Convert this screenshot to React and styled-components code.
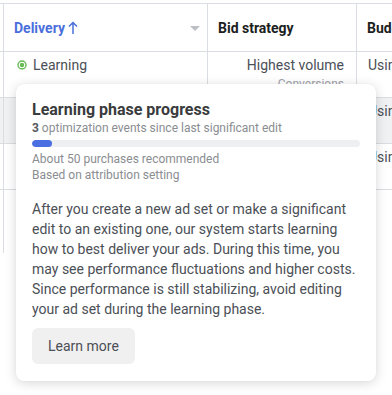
import React from "react";
import styled, { createGlobalStyle } from "styled-components";

const Global = createGlobalStyle`
  html, body { margin: 0; padding: 0; background: #fff; }
  body { width: 392px; height: 395px; overflow: hidden; font-family: Roboto, "Liberation Sans", Arial, sans-serif; }
`;

const Page = styled.div`
  position: relative;
  width: 392px;
  height: 395px;
  overflow: hidden;
  padding-top: 3px;
  box-sizing: border-box;
`;

const Table = styled.div`
  display: grid;
  grid-template-columns: 44px 204px 149px 120px;
  margin-left: -40px;
  border-top: 1px solid #dadde1;
  width: max-content;
`;

const HeadCell = styled.div`
  box-sizing: border-box;
  height: 48px;
  display: flex;
  align-items: center;
  padding: 0 11px 0 10px;
  border-right: 1px solid #dadde1;
  border-bottom: 1px solid #dadde1;
  font-size: 14px;
  font-weight: 700;
  color: ${(p) => (p.$active ? "#4a6fdc" : "#1c1e21")};
  gap: 3px;
`;

const Cell = styled.div`
  box-sizing: border-box;
  height: ${(p) => p.$h || 46}px;
  padding: 4px 12px 0 11px;
  border-right: ${(p) => (p.$open ? "none" : "1px solid #dadde1")};
  border-bottom: ${(p) => (p.$last ? "none" : "1px solid #dadde1")};
  background: ${(p) => (p.$hover ? "#f0f1f3" : "#fff")};
  font-size: 14px;
  line-height: 18px;
  color: #4b4f56;
  display: flex;
  flex-direction: column;
  align-items: ${(p) => (p.$right ? "flex-end" : "flex-start")};
  overflow: hidden;
  white-space: nowrap;
`;

const Status = styled.div`
  display: flex;
  align-items: center;
  gap: 6px;
  margin-left: 2px;
`;

const Sub = styled.div`
  font-size: 12px;
  line-height: 16px;
  margin-top: 2px;
  color: #9da1a7;
`;

const Spacer = styled.div`
  flex: 1;
`;

const Caret = styled.div`
  width: 0;
  height: 0;
  border-left: 5px solid transparent;
  border-right: 5px solid transparent;
  border-top: 5px solid #bcc0c4;
  margin-right: -4px;
  margin-top: 2px;
`;

const Popover = styled.div`
  position: absolute;
  left: 16px;
  top: 84px;
  width: 360px;
  box-sizing: border-box;
  padding: 16px;
  background: #fff;
  border-radius: 8px;
  box-shadow: 0 2px 12px rgba(0, 0, 0, 0.16), 0 0 1px rgba(0, 0, 0, 0.08);
  display: flex;
  flex-direction: column;
`;

const Title = styled.div`
  font-size: 16px;
  line-height: 20px;
  font-weight: 700;
  color: #3a3b3d;
`;

const Meta = styled.div`
  font-size: 12px;
  line-height: 16px;
  color: #8a8d91;
  b {
    font-weight: 700;
    color: #55585c;
  }
`;

const Track = styled.div`
  height: 7px;
  margin: 4px 0 4px;
  border-radius: 4px;
  background: #eeeff1;
  overflow: hidden;
`;

const Fill = styled.div`
  height: 100%;
  border-radius: 4px;
  background: #4a6fe3;
`;

const Body = styled.p`
  margin: 16px 0 9px;
  font-size: 14px;
  line-height: 20px;
  color: #4b4f56;
`;

const Button = styled.button`
  align-self: flex-start;
  height: 36px;
  padding: 0 16px;
  border: none;
  border-radius: 6px;
  background: #f0f0f0;
  font-family: inherit;
  font-size: 14px;
  color: #4b4f56;
  margin-bottom: 1px;
`;

const Dot = () => (
  <svg width="10" height="10" viewBox="0 0 10 10">
    <circle cx="5" cy="5" r="4" fill="none" stroke="#66bb55" strokeWidth="1.4" />
    <circle cx="5" cy="5" r="2.2" fill="#66bb55" />
  </svg>
);

const Arrow = () => (
  <svg width="10" height="14" viewBox="0 0 10 14">
    <path d="M5 13V2M1 5.5L5 1.5L9 5.5" fill="none" stroke="#4a6fdc" strokeWidth="1.5" />
  </svg>
);

const rows = [{ hover: true }, { hover: false }];

export default function App() {
  return (
    <>
      <Global />
      <Page>
        <Table>
          <HeadCell />
          <HeadCell $active>
            Delivery
            <Arrow />
            <Spacer />
            <Caret />
          </HeadCell>
          <HeadCell>Bid strategy</HeadCell>
          <HeadCell>Budget</HeadCell>

          <Cell />
          <Cell>
            <Status>
              <Dot />
              Learning
            </Status>
          </Cell>
          <Cell $right>
            Highest volume
            <Sub>Conversions</Sub>
          </Cell>
          <Cell>Using ad set budget</Cell>

          {rows.map((r, i) => (
            <React.Fragment key={i}>
              <Cell $hover={r.hover} />
              <Cell $hover={r.hover} />
              <Cell $hover={r.hover} $right />
              <Cell $hover={r.hover}>Using ad set budget</Cell>
            </React.Fragment>
          ))}

          <Cell $h={63} $last />
          <Cell $h={63} $last />
          <Cell $h={63} $last />
          <Cell $h={63} $last $open />
        </Table>

        <Popover>
          <Title>Learning phase progress</Title>
          <Meta>
            <b>3</b> optimization events since last significant edit
          </Meta>
          <Track>
            <Fill style={{ width: `${(3 / 50) * 100}%` }} />
          </Track>
          <Meta>About 50 purchases recommended</Meta>
          <Meta>Based on attribution setting</Meta>
          <Body>
            After you create a new ad set or make a significant edit to an existing one, our system
            starts learning how to best deliver your ads. During this time, you may see performance
            fluctuations and higher costs. Since performance is still stabilizing, avoid editing your
            ad set during the learning phase.
          </Body>
          <Button>Learn more</Button>
        </Popover>
      </Page>
    </>
  );
}
